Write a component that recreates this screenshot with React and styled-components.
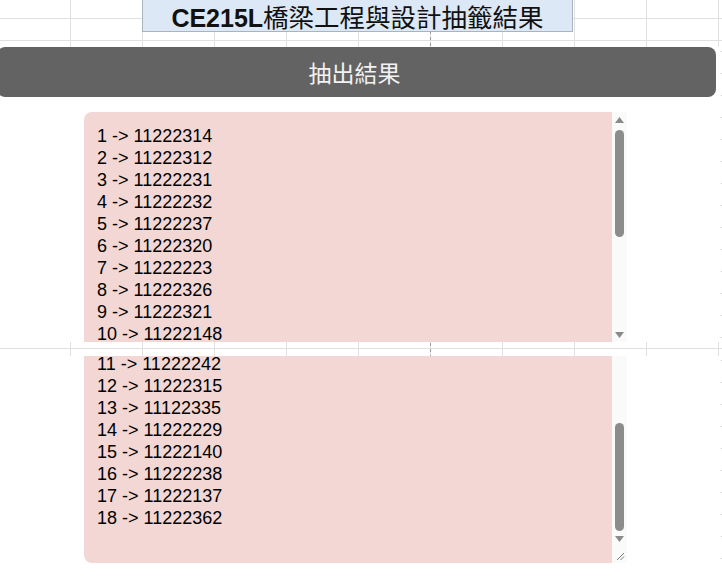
import styled, { createGlobalStyle } from "styled-components"

const first = [
  "1 -> 11222314",
  "2 -> 11222312",
  "3 -> 11222231",
  "4 -> 11222232",
  "5 -> 11222237",
  "6 -> 11222320",
  "7 -> 11222223",
  "8 -> 11222326",
  "9 -> 11222321",
  "10 -> 11222148",
]

const second = [
  "11 -> 11222242",
  "12 -> 11222315",
  "13 -> 11122335",
  "14 -> 11222229",
  "15 -> 11222140",
  "16 -> 11222238",
  "17 -> 11222137",
  "18 -> 11222362",
]

const Arrow = ({ up }) => (
  <svg width="9" height="6" viewBox="0 0 9 6">
    <path d={up ? "M0 6 L4.5 0 L9 6 Z" : "M0 0 L9 0 L4.5 6 Z"} fill="#8a8a8a" />
  </svg>
)

const Resizer = () => (
  <svg width="9" height="9" viewBox="0 0 9 9">
    <path d="M1 8 L8 1 M4.5 8 L8 4.5" stroke="#7a7a7a" strokeWidth="1" />
  </svg>
)

const ResultBox = ({ lines, height, gap, offset, top, bottom, thumbTop, thumbHeight }) => {
  return (
    <StBox $height={height} $gap={gap}>
      <StText $top={top} $bottom={bottom}>
        <div style={{ marginTop: offset }}>
          {lines.map((l) => (
            <StLine key={l}>{l}</StLine>
          ))}
        </div>
      </StText>
      <StScroll>
        {top && (
          <StButton>
            <Arrow up />
          </StButton>
        )}
        <StTrack>
          <StThumb style={{ marginTop: thumbTop, height: thumbHeight }} />
        </StTrack>
        <StButton>
          <Arrow />
        </StButton>
        {bottom && (
          <StCorner>
            <Resizer />
          </StCorner>
        )}
      </StScroll>
    </StBox>
  )
}

const App = () => {
  return (
    <>
      <GlobalStyle />
      <StSheet>
        <StTitle>
          <span className="code">CE215L</span>
          <span className="name">橋梁工程與設計抽籤結果</span>
        </StTitle>
        <StPanel $gap={15} $height={295}>
          <StBar>抽出結果</StBar>
          <ResultBox
            lines={first}
            height={230}
            gap={15}
            offset={13}
            top
            thumbTop={3}
            thumbHeight={107}
          />
        </StPanel>
        <StPanel $gap={14}>
          <ResultBox
            lines={second}
            height={207}
            gap={0}
            offset={-3}
            bottom
            thumbTop={67}
            thumbHeight={108}
          />
        </StPanel>
      </StSheet>
    </>
  )
}

const GlobalStyle = createGlobalStyle`
  body {
    margin: 0;
    background: #fff;
  }
`

const StSheet = styled.div`
  width: 722px;
  height: 576px;
  overflow: hidden;
  display: flex;
  flex-direction: column;
  background-color: #fff;
  background-image:
    linear-gradient(to bottom, #9a9a9a 3px, transparent 3px),
    linear-gradient(to right, #e0e0e0 1px, transparent 1px),
    linear-gradient(to bottom, #e0e0e0 1px, transparent 1px);
  background-size: 1px 6px, 72px 100%, 100% 22px;
  background-position: 430px 1px, 70px 0, 0 18px;
  background-repeat: repeat-y, repeat, repeat;
  & > * {
    flex-shrink: 0;
  }
`

const StTitle = styled.div`
  box-sizing: border-box;
  margin-left: 142px;
  width: 431px;
  height: 32px;
  display: flex;
  justify-content: center;
  align-items: baseline;
  padding-top: 1px;
  background: #dce8f5;
  border: 1px solid #a9b4c0;
  border-top: none;
  color: #111;
  line-height: 30px;
  .code {
    font-family: "Liberation Sans", Arial, sans-serif;
    font-weight: 700;
    font-size: 25px;
  }
  .name {
    font-family: "Noto Sans CJK TC", sans-serif;
    font-weight: 400;
    font-size: 25.5px;
  }
`

/* white sheet overlay that hides the cell grid, with the faint dotted edge on the right */
const StPanel = styled.div`
  margin-top: ${(p) => p.$gap}px;
  height: ${(p) => (p.$height ? `${p.$height}px` : "auto")};
  flex: ${(p) => (p.$height ? "none" : "1")};
  display: flex;
  flex-direction: column;
  background-color: #fff;
  background-image: linear-gradient(to bottom, #cfcfcf 1px, transparent 1px);
  background-size: 1px 22px;
  background-position: 721px 4px;
  background-repeat: repeat-y;
  & > * {
    flex-shrink: 0;
  }
`

const StBar = styled.div`
  margin-left: -3px;
  width: 719px;
  height: 50px;
  border-radius: 8px;
  background: #636363;
  color: #f2f2f2;
  display: flex;
  align-items: center;
  justify-content: center;
  font-family: "Noto Sans CJK TC", sans-serif;
  font-size: 23px;
  padding-right: 4px;
  box-sizing: border-box;
`

const StBox = styled.div`
  margin: ${(p) => p.$gap}px 0 0 84px;
  width: 543px;
  height: ${(p) => p.$height}px;
  display: flex;
`

const StText = styled.div`
  flex: 1;
  overflow: hidden;
  background: #f2d7d4;
  border-top-left-radius: ${(p) => (p.$top ? "8px" : "0")};
  border-bottom-left-radius: ${(p) => (p.$bottom ? "8px" : "0")};
  padding-left: 13px;
  font-family: "Liberation Sans", Arial, sans-serif;
  font-size: 18px;
  color: #000;
`

const StLine = styled.div`
  height: 22px;
  line-height: 22px;
`

const StScroll = styled.div`
  width: 15px;
  display: flex;
  flex-direction: column;
  background: #fafafa;
`

const StButton = styled.div`
  height: 15px;
  display: flex;
  align-items: center;
  justify-content: center;
  flex-shrink: 0;
`

const StTrack = styled.div`
  flex: 1;
  display: flex;
  flex-direction: column;
  align-items: center;
`

const StThumb = styled.div`
  width: 9px;
  border-radius: 5px;
  background: #8c8c8c;
`

const StCorner = styled.div`
  height: 15px;
  display: flex;
  align-items: flex-end;
  justify-content: flex-end;
  padding: 0 2px 2px 0;
  flex-shrink: 0;
`

export default App
